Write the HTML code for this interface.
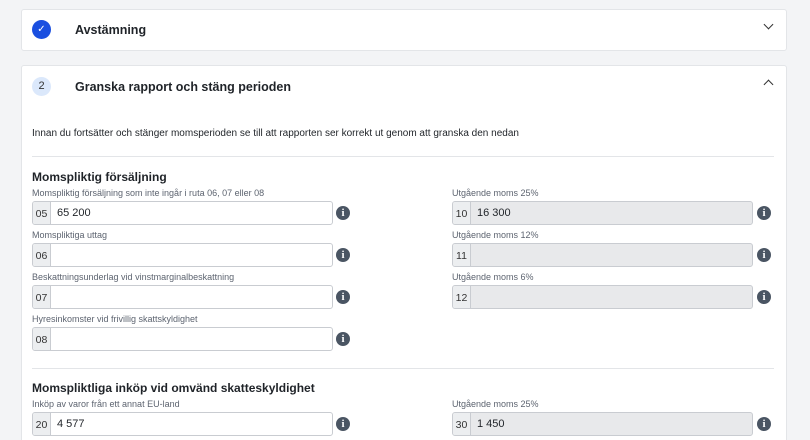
<!DOCTYPE html><html><head><meta charset="utf-8"><style>
html,body{margin:0;width:810px;height:440px;overflow:hidden}
body{background:#f3f4f6;font-family:"Liberation Sans",sans-serif;color:#1f2328;position:relative}
.card{position:absolute;left:21px;width:764px;background:#fff;border:1px solid #e3e5e8;border-radius:3px}
.a{position:absolute}
.step{position:absolute;left:10px;width:19px;height:19px;border-radius:50%;font-size:11px;text-align:center;line-height:19px}
.title{position:absolute;left:53px;font-size:12.5px;font-weight:bold}
.chev{position:absolute;right:14px;width:6px;height:6px;border-right:1.2px solid #333;border-bottom:1.2px solid #333}
.lbl{position:absolute;font-size:9px;color:#5d6470}
.inp{position:absolute;width:299px;height:22px;border:1px solid #c9ccd1;border-radius:3px;background:#fff;font-size:11px;display:flex;overflow:hidden}
.inp.g{background:#e8e9eb}
.inp b{font-weight:normal;width:17px;background:#eceef0;border-right:1px solid #c9ccd1;color:#333;font-size:10.5px;text-align:center;line-height:25px}
.inp span{padding-left:6px;line-height:23px}
.i{position:absolute;width:14px;height:14px;border-radius:50%;background:#4a5563;color:#fff;font-size:11px;font-weight:bold;text-align:center;line-height:14px;font-family:"Liberation Serif",serif}
.h{position:absolute;left:32px;font-size:12px;font-weight:bold}
.hr{position:absolute;left:32px;width:742px;height:1px;background:#e3e5e8}
</style></head><body>
<div class="card" style="top:9px;height:40px">
<div class="step" style="top:10px;background:#1a4fe0;color:#fff;font-size:10px">✓</div>
<div class="title" style="top:13px">Avstämning</div>
<div class="chev" style="top:11px;transform:rotate(45deg)"></div>
</div>
<div class="card" style="top:65px;height:390px">
<div class="step" style="top:11px;background:#dbe8fb;color:#333">2</div>
<div class="title" style="top:14px">Granska rapport och stäng perioden</div>
<div class="chev" style="top:15px;transform:rotate(-135deg)"></div>
</div>
<div class="a" style="left:32px;top:128px;font-size:10px">Innan du fortsätter och stänger momsperioden se till att rapporten ser korrekt ut genom att granska den nedan</div>
<div class="hr" style="top:156px"></div>
<div class="h" style="top:170px">Momspliktig försäljning</div>
<div class="lbl" style="left:32px;top:188px">Momspliktig försäljning som inte ingår i ruta 06, 07 eller 08</div>
<div class="inp" style="left:32px;top:201px"><b>05</b><span>65 200</span></div><div class="i" style="left:336px;top:206px">i</div>
<div class="lbl" style="left:32px;top:230px">Momspliktiga uttag</div>
<div class="inp" style="left:32px;top:243px"><b>06</b><span></span></div><div class="i" style="left:336px;top:248px">i</div>
<div class="lbl" style="left:32px;top:272px">Beskattningsunderlag vid vinstmarginalbeskattning</div>
<div class="inp" style="left:32px;top:285px"><b>07</b><span></span></div><div class="i" style="left:336px;top:290px">i</div>
<div class="lbl" style="left:32px;top:314px">Hyresinkomster vid frivillig skattskyldighet</div>
<div class="inp" style="left:32px;top:327px"><b>08</b><span></span></div><div class="i" style="left:336px;top:332px">i</div>
<div class="lbl" style="left:452px;top:188px">Utgående moms 25%</div>
<div class="inp g" style="left:452px;top:201px"><b>10</b><span>16 300</span></div><div class="i" style="left:757px;top:206px">i</div>
<div class="lbl" style="left:452px;top:230px">Utgående moms 12%</div>
<div class="inp g" style="left:452px;top:243px"><b>11</b><span></span></div><div class="i" style="left:757px;top:248px">i</div>
<div class="lbl" style="left:452px;top:272px">Utgående moms 6%</div>
<div class="inp g" style="left:452px;top:285px"><b>12</b><span></span></div><div class="i" style="left:757px;top:290px">i</div>
<div class="hr" style="top:368px"></div>
<div class="h" style="top:381px">Momspliktliga inköp vid omvänd skatteskyldighet</div>
<div class="lbl" style="left:32px;top:399px">Inköp av varor från ett annat EU-land</div>
<div class="inp" style="left:32px;top:412px"><b>20</b><span>4 577</span></div><div class="i" style="left:336px;top:417px">i</div>
<div class="lbl" style="left:452px;top:399px">Utgående moms 25%</div>
<div class="inp g" style="left:452px;top:412px"><b>30</b><span>1 450</span></div><div class="i" style="left:757px;top:417px">i</div>
</body></html>
